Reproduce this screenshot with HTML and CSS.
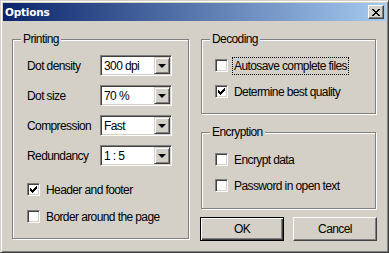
FILE: index.html
```html
<!DOCTYPE html>
<html lang="en">
<head>
    <meta charset="UTF-8">
    <title>Options</title>
    <link rel="stylesheet" href="styles.css">
</head>
<body>
    <div class="window">
        <div class="titlebar">
            <span class="title">Options</span>
            <span class="close">
                <svg width="8" height="7" viewBox="0 0 8 7" shape-rendering="crispEdges">
                    <rect x="0" y="0" width="2" height="1"/><rect x="6" y="0" width="2" height="1"/>
                    <rect x="1" y="1" width="2" height="1"/><rect x="5" y="1" width="2" height="1"/>
                    <rect x="2" y="2" width="4" height="1"/>
                    <rect x="3" y="3" width="2" height="1"/>
                    <rect x="2" y="4" width="4" height="1"/>
                    <rect x="1" y="5" width="2" height="1"/><rect x="5" y="5" width="2" height="1"/>
                    <rect x="0" y="6" width="2" height="1"/><rect x="6" y="6" width="2" height="1"/>
                </svg>
            </span>
        </div>

        <div class="content">
            <div class="group printing">
                <span class="group-title">Printing</span>

                <div class="field">
                    <span class="field-label">Dot density</span>
                    <div class="combo"><span class="combo-value">300 dpi</span><span class="combo-btn"><i class="arrow"></i></span></div>
                </div>
                <div class="field">
                    <span class="field-label">Dot size</span>
                    <div class="combo"><span class="combo-value">70 %</span><span class="combo-btn"><i class="arrow"></i></span></div>
                </div>
                <div class="field">
                    <span class="field-label">Compression</span>
                    <div class="combo"><span class="combo-value">Fast</span><span class="combo-btn"><i class="arrow"></i></span></div>
                </div>
                <div class="field">
                    <span class="field-label">Redundancy</span>
                    <div class="combo"><span class="combo-value">1 : 5</span><span class="combo-btn"><i class="arrow"></i></span></div>
                </div>

                <div class="checks">
                    <div class="check"><span class="box checked"></span><span>Header and footer</span></div>
                    <div class="check"><span class="box"></span><span>Border around the page</span></div>
                </div>
            </div>

            <div class="side">
                <div class="group decoding">
                    <span class="group-title">Decoding</span>
                    <div class="checks">
                        <div class="check"><span class="box"></span><span class="focus">Autosave complete files</span></div>
                        <div class="check"><span class="box checked"></span><span>Determine best quality</span></div>
                    </div>
                </div>

                <div class="group encryption">
                    <span class="group-title">Encryption</span>
                    <div class="checks">
                        <div class="check"><span class="box"></span><span>Encrypt data</span></div>
                        <div class="check"><span class="box"></span><span>Password in open text</span></div>
                    </div>
                </div>

                <div class="buttons">
                    <button class="btn default">OK</button>
                    <button class="btn">Cancel</button>
                </div>
            </div>
        </div>
    </div>
</body>
</html>
```

FILE: styles.css
```css
body {
    margin: 0;
    font-family: "Liberation Sans", Arial, sans-serif;
    font-size: 12px;
    letter-spacing: -0.6px;
    color: #000;
    background: #d4d0c8;
}
.window {
    width: 389px;
    height: 253px;
    box-sizing: border-box;
    background: #d4d0c8;
    border: 1px solid;
    border-color: #d4d0c8 #404040 #404040 #d4d0c8;
    box-shadow: inset 1px 1px #fff, inset -1px -1px #808080;
    padding: 2px;
}

/* title bar */
.titlebar {
    height: 18px;
    display: flex;
    align-items: center;
    justify-content: space-between;
    background: linear-gradient(to right, #0a246a, #a6caf0);
}
.title {
    font-family: "DejaVu Sans", Verdana, sans-serif;
    font-weight: bold;
    font-size: 10.5px;
    letter-spacing: -0.2px;
    color: #fff;
    padding-left: 2px;
}
.close {
    width: 16px;
    height: 14px;
    box-sizing: border-box;
    margin-right: 2px;
    display: flex;
    align-items: center;
    justify-content: center;
    background: #d4d0c8;
    border: 1px solid;
    border-color: #fff #404040 #404040 #fff;
    box-shadow: inset -1px -1px #808080;
}
.close svg {
    display: block;
    fill: #000;
    margin-left: -1px;
}

/* body */
.content {
    display: flex;
    padding: 18px 0 0 9px;
}
.group {
    position: relative;
    box-sizing: border-box;
    border: 1px solid #808080;
    box-shadow: inset 1px 1px #fff, 1px 1px #fff;
}
.group-title {
    position: absolute;
    top: -8px;
    left: 8px;
    padding: 0 2px;
    line-height: 15px;
    background: #d4d0c8;
}
.printing {
    width: 177px;
    height: 200px;
    padding: 15px 0 0 14px;
}
.side {
    margin-left: 11px;
    width: 177px;
}
.decoding {
    width: 175px;
    height: 75px;
    margin-left: 1px;
    padding: 19px 0 0 13px;
}
.encryption {
    width: 175px;
    height: 77px;
    margin: 18px 0 0 1px;
    padding: 20px 0 0 13px;
}

/* combo rows */
.field {
    display: flex;
    align-items: center;
    height: 21px;
    margin-bottom: 9px;
}
.field-label {
    width: 73px;
}
.combo {
    width: 72px;
    height: 21px;
    box-sizing: border-box;
    display: flex;
    align-items: center;
    justify-content: space-between;
    background: #fff;
    border: 1px solid;
    border-color: #808080 #fff #fff #808080;
    box-shadow: inset 1px 1px #404040, inset -1px -1px #d4d0c8;
    padding: 1px;
}
.combo-value {
    padding-left: 2px;
}
.combo-btn {
    width: 16px;
    height: 17px;
    box-sizing: border-box;
    display: flex;
    align-items: center;
    justify-content: center;
    background: #d4d0c8;
    border: 1px solid;
    border-color: #d4d0c8 #404040 #404040 #d4d0c8;
    box-shadow: inset 1px 1px #fff, inset -1px -1px #808080;
}
.arrow {
    width: 0;
    height: 0;
    border-left: 4px solid transparent;
    border-right: 4px solid transparent;
    border-top: 4px solid #000;
    margin-top: 1px;
}

/* checkboxes */
.checks {
    display: flex;
    flex-direction: column;
    gap: 13px;
}
.printing .checks {
    margin-top: 17px;
    gap: 14px;
}
.check {
    display: flex;
    align-items: center;
    gap: 6px;
    height: 13px;
}
.box {
    width: 13px;
    height: 13px;
    box-sizing: border-box;
    flex: none;
    background: #fff;
    border: 1px solid;
    border-color: #808080 #fff #fff #808080;
    box-shadow: inset 1px 1px #404040, inset -1px -1px #d4d0c8;
    position: relative;
}
.box.checked::after {
    content: "";
    position: absolute;
    left: 2px;
    top: 2px;
    width: 7px;
    height: 7px;
    background:
        linear-gradient(#000, #000) 0 2px / 1px 3px no-repeat,
        linear-gradient(#000, #000) 1px 3px / 1px 3px no-repeat,
        linear-gradient(#000, #000) 2px 4px / 1px 3px no-repeat,
        linear-gradient(#000, #000) 3px 3px / 1px 3px no-repeat,
        linear-gradient(#000, #000) 4px 2px / 1px 3px no-repeat,
        linear-gradient(#000, #000) 5px 1px / 1px 3px no-repeat,
        linear-gradient(#000, #000) 6px 0 / 1px 3px no-repeat;
}
.focus {
    margin-left: -2px;
    padding: 0 1px;
    line-height: 16px;
    border: 1px dotted #000;
}

/* buttons */
.buttons {
    display: flex;
    justify-content: space-between;
    margin-top: 8px;
}
.btn {
    width: 84px;
    height: 24px;
    box-sizing: border-box;
    font: inherit;
    letter-spacing: inherit;
    color: #000;
    background: #d4d0c8;
    border: 1px solid;
    border-color: #fff #404040 #404040 #fff;
    box-shadow: inset -1px -1px #808080;
    padding: 0;
}
.btn.default {
    border: 1px solid #000;
    box-shadow: inset 1px 1px #fff, inset -1px -1px #404040, inset -2px -2px #808080;
}
```
